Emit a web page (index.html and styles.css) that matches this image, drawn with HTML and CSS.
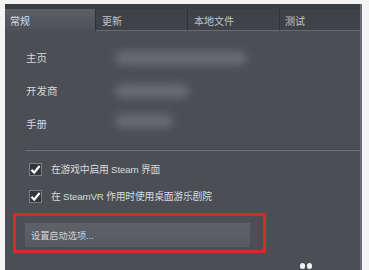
FILE: index.html
```html
<!DOCTYPE html>
<html>
<head>
<meta charset="utf-8">
<link rel="stylesheet" href="styles.css">
</head>
<body>
<div class="window">
  <div class="tabs">
    <div class="tab active">常规</div>
    <div class="tab">更新</div>
    <div class="tab">本地文件</div>
    <div class="tab last">测试</div>
  </div>
  <div class="content">
    <div class="row"><span class="label">主页</span><span class="blob w1"></span></div>
    <div class="row"><span class="label">开发商</span><span class="blob w2"></span></div>
    <div class="row"><span class="label">手册</span><span class="blob w3"></span></div>
    <div class="sep"></div>
    <div class="check-row">
      <span class="box"><svg viewBox="0 0 13 13" width="13" height="13"><path d="M2.5 6.8 L5.2 9.6 L10.6 3" fill="none" stroke="#fff" stroke-width="2.2"/></svg></span>
      <span class="ctext">在游戏中启用 Steam 界面</span>
    </div>
    <div class="check-row">
      <span class="box"><svg viewBox="0 0 13 13" width="13" height="13"><path d="M2.5 6.8 L5.2 9.6 L10.6 3" fill="none" stroke="#fff" stroke-width="2.2"/></svg></span>
      <span class="ctext">在 SteamVR 作用时使用桌面游乐剧院</span>
    </div>
    <div class="highlight">
      <div class="btn">设置启动选项...</div>
    </div>
  </div>
  <div class="mark"><span></span><span></span></div>
</div>
</body>
</html>
```
FILE: styles.css
```css
html, body {
  margin: 0;
  padding: 0;
  background: #f4f4f5;
  overflow: hidden;
}
body {
  width: 369px;
  height: 270px;
  font-family: "Liberation Sans", "Noto Sans CJK SC", sans-serif;
}
.window {
  position: relative;
  margin: 4px 7px 0 5px;
  height: 266px;
  background: #4b4e55;
  border-right: 2px solid #6a6d73;
  box-sizing: border-box;
}
.tabs {
  display: flex;
  padding-top: 5px;
  background: #3a3d43;
  height: 27px;
  box-sizing: border-box;
}
.tab {
  width: 92px;
  height: 22px;
  box-sizing: border-box;
  padding: 4px 0 0 6px;
  font-size: 10px;
  color: #c3c5c8;
  background: #3f4248;
  border-right: 1px solid #2f3236;
  border-bottom: 1px solid #686b71;
}
.tab.last {
  flex: 1;
  padding-left: 5px;
  border-right: none;
}
.tab.active {
  width: 91px;
  height: 22px;
  background: linear-gradient(#5c5f66, #4d5057);
  border-bottom: none;
  color: #dcdde0;
  padding-left: 5px;
}
.content {
  padding-top: 10px;
}
.row {
  display: flex;
  align-items: center;
  height: 33px;
  padding-left: 21px;
}
.label {
  width: 89px;
  font-size: 10.5px;
  color: #d6d7da;
}
.blob {
  height: 14px;
  border-radius: 8px;
  background: #696c73;
  filter: blur(4px);
}
.w1 { width: 132px; }
.w2 { width: 74px; }
.w3 { width: 58px; margin-top: -5px; }
.sep {
  margin: 9px 0 0 20px;
  height: 1px;
  border-top: 1px solid #43464c;
  background: #6f7278;
}
.check-row {
  display: flex;
  align-items: center;
  height: 18px;
  margin-top: 9px;
  padding-left: 24px;
}
.box {
  width: 13px;
  height: 13px;
  box-sizing: border-box;
  background: #33363b;
  border: 1px solid #7a7d82;
  display: flex;
  align-items: center;
  justify-content: center;
}
.box svg {
  flex: none;
}
.ctext {
  margin-left: 9px;
  font-size: 9.8px;
  letter-spacing: -0.2px;
  color: #d9dadd;
}
.highlight {
  margin: 8px 0 0 8px;
  width: 253px;
  height: 40px;
  box-sizing: border-box;
  border: 3px solid #e0262b;
  padding: 7px 13px 0 9px;
}
.btn {
  height: 24px;
  background: linear-gradient(#5e6168, #575a61);
  color: #d2d3d6;
  font-size: 9.2px;
  padding-left: 6px;
  display: flex;
  align-items: center;
}
.mark {
  position: absolute;
  left: 295px;
  top: 259px;
  display: flex;
  gap: 2px;
}
.mark span {
  width: 5px;
  height: 6px;
  border-radius: 3px;
  background: #f2f2f2;
}
```
